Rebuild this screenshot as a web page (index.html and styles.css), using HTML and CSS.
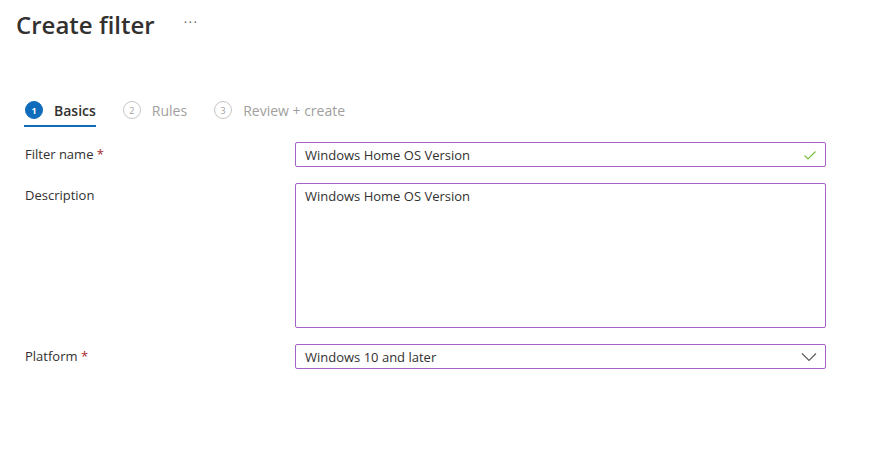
FILE: index.html
```html
<!DOCTYPE html>
<html>
<head lang="en">
    <meta charset="UTF-8">
    <title>Create filter</title>
    <link rel="stylesheet" href="styles.css">
</head>
<body>
    <div class="page">
        <div class="header">
            <h1 class="title">Create filter</h1>
            <span class="more">&middot;&middot;&middot;</span>
        </div>

        <ul class="steps">
            <li class="step on"><span class="num">1</span><span class="name">Basics</span></li>
            <li class="step"><span class="num">2</span><span class="name">Rules</span></li>
            <li class="step"><span class="num">3</span><span class="name">Review + create</span></li>
        </ul>

        <div class="form">
            <div class="row">
                <label class="label">Filter name <span class="req">*</span></label>
                <div class="field input">
                    <span class="value">Windows Home OS Version</span>
                    <svg class="icon" width="14" height="14" viewBox="0 0 14 14">
                        <path d="M1.5 7.5 L5 11 L12.5 3.5" fill="none" stroke="#7ac143" stroke-width="1.2"/>
                    </svg>
                </div>
            </div>
            <div class="row">
                <label class="label">Description</label>
                <div class="field textarea">
                    <span class="value">Windows Home OS Version</span>
                </div>
            </div>
            <div class="row">
                <label class="label">Platform <span class="req">*</span></label>
                <div class="field input">
                    <span class="value">Windows 10 and later</span>
                    <svg class="icon" width="16" height="10" viewBox="0 0 16 10">
                        <path d="M1 1.5 L8 8.5 L15 1.5" fill="none" stroke="#605e5c" stroke-width="1.2"/>
                    </svg>
                </div>
            </div>
        </div>
    </div>
</body>
</html>
```

FILE: styles.css
```css
*{
    margin:0;  padding:0;
    box-sizing: border-box;
}
body{
    background:#fff;
    font-family: "Open Sans", "Noto Sans", sans-serif;
    color:#323130;
}
.page{
    padding:6px 0 0 16px;
    width:826px;
}
.header{
    display:flex;
    align-items:center;
    gap:29px;
    height:36px;
}
.title{
    font-size:24px;
    font-weight:600;
    letter-spacing:0;
}
.more{
    font-size:13px;
    color:#605e5c;
    letter-spacing:1.5px;
    margin-top:-4px;
}
.steps{
    list-style:none;
    display:flex;
    gap:26px;
    margin:58px 0 0 8px;
}
.step{
    display:flex;
    align-items:center;
    gap:11px;
    height:27px;
    padding-bottom:7px;
    color:#a19f9d;
    font-size:14px;
}
.step .num{
    width:18px;
    height:18px;
    border-radius:50%;
    border:1px solid #c8c6c4;
    font-size:9px;
    display:flex;
    align-items:center;
    justify-content:center;
    color:#a19f9d;
    margin-left:1px;
}
.step.on{
    border-bottom:2px solid #0f6cbd;
    padding-bottom:5px;
}
.step.on .num{
    background:#0f6cbd;
    border-color:#0f6cbd;
    color:#fff;
    font-weight:700;
}
.step.on .name{
    color:#323130;
    font-weight:600;
}
.form{
    margin:15px 0 0 9px;
    display:flex;
    flex-direction:column;
    gap:16px;
}
.row{
    display:flex;
    align-items:flex-start;
}
.label{
    width:270px;
    font-size:13px;
    line-height:25px;
}
.req{
    color:#a4262c;
}
.field{
    flex:1;
    border:1px solid #a661c6;
    border-radius:2px;
    font-size:13px;
    display:flex;
    padding:0 8px 0 9px;
}
.input{
    height:25px;
    align-items:center;
    justify-content:space-between;
}
.textarea{
    height:145px;
    padding-top:3px;
    align-items:flex-start;
}
.icon{
    display:block;
}
```
